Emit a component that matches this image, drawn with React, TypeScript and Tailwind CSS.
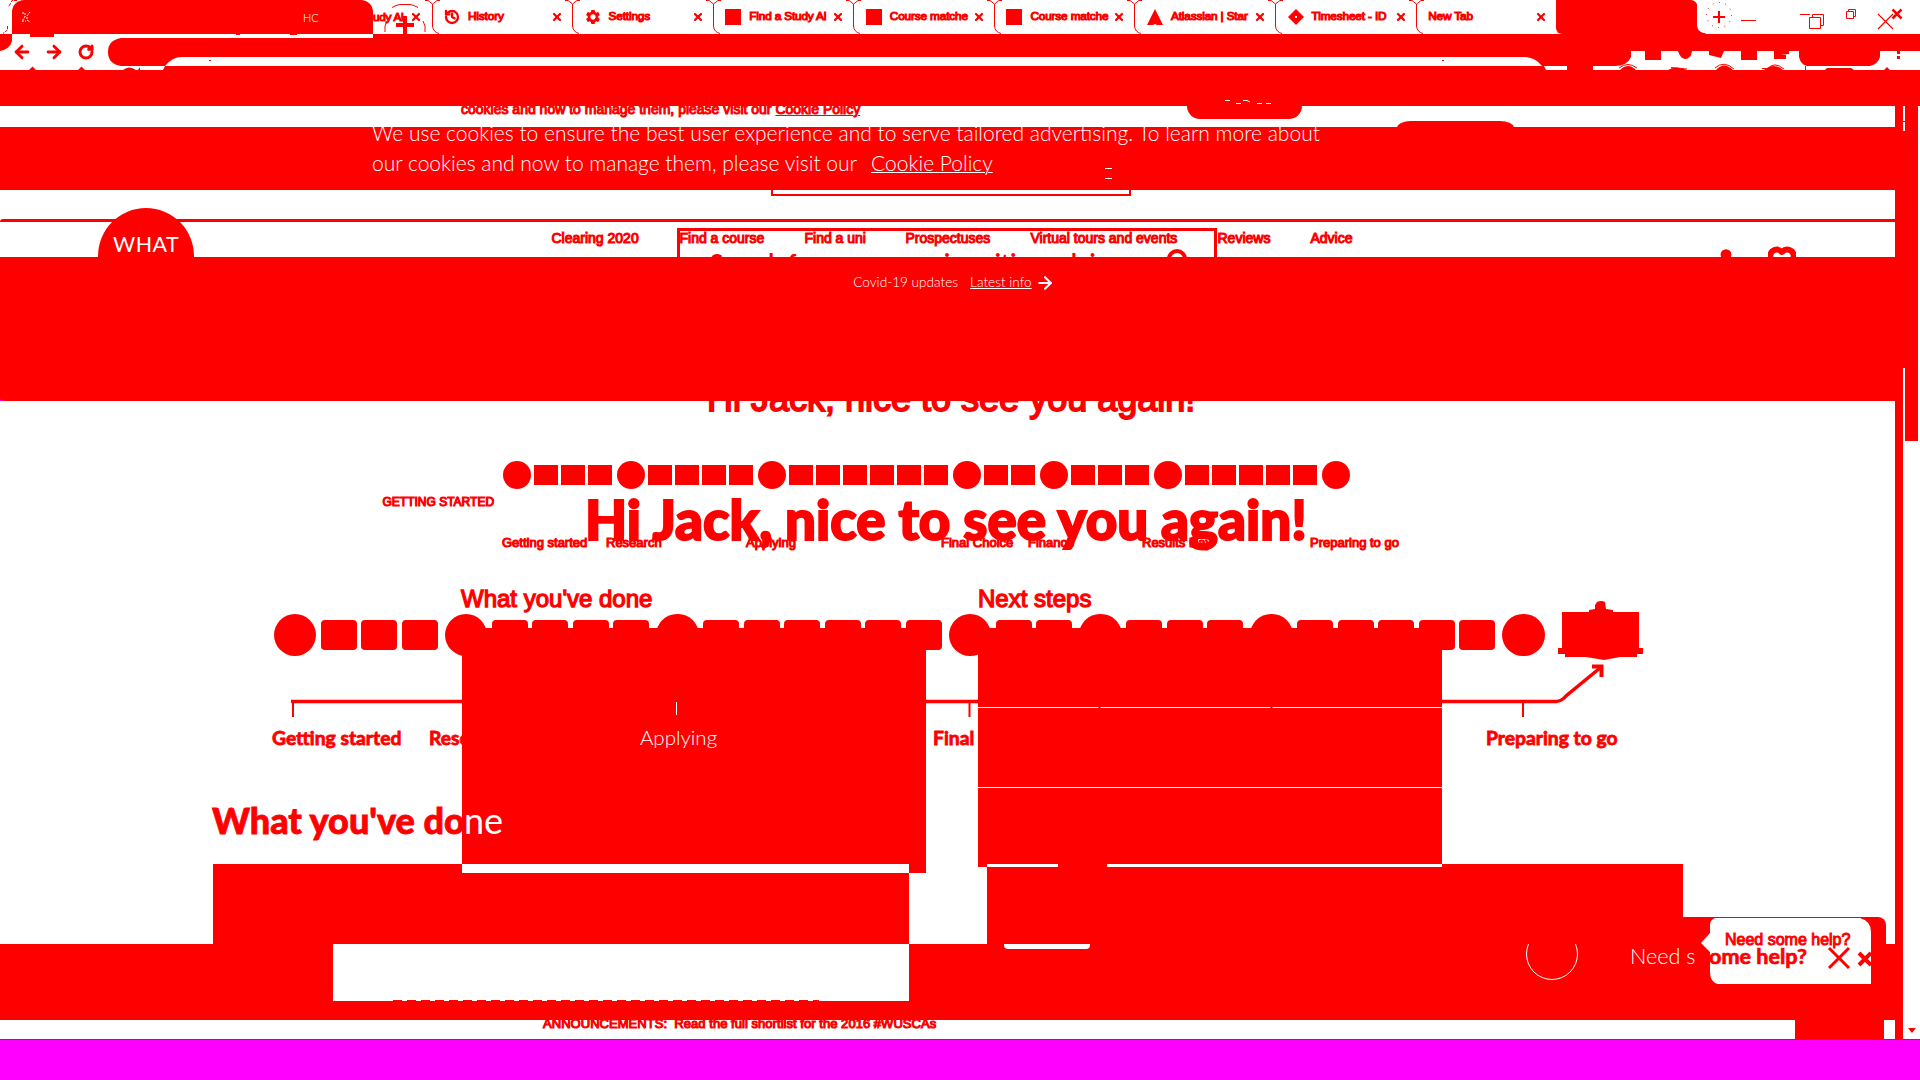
import { ArrowLeft, ArrowRight, Heart, History, RotateCw, Search, User, X } from "lucide-react";
import { MdSettings } from "react-icons/md";

const tabs = [
  { label: "History", icon: "history" },
  { label: "Settings", icon: "gear" },
  { label: "Find a Study Al", icon: "square" },
  { label: "Course matche", icon: "square" },
  { label: "Course matche", icon: "square" },
  { label: "Atlassian | Star", icon: "triangle" },
  { label: "Timesheet - ID", icon: "diamond" },
  { label: "New Tab", icon: "" },
];

function TabIcon({ kind }: { kind: string }) {
  if (kind === "history") return <History className="size-4" strokeWidth={3.5} />;
  if (kind === "gear") return <MdSettings className="size-4 scale-110" />;
  if (kind === "square") return <div className="size-4 bg-[#ff0000]" />;
  if (kind === "triangle")
    return (
      <svg className="size-4" viewBox="0 0 16 16">
        <path d="M8 0L16 16H10L8 15L6 16H0Z" fill="currentColor" />
      </svg>
    );
  return (
    <svg className="size-4" viewBox="0 0 16 16">
      <path d="M8 0L16 8L8 16L0 8ZM7 7V9H9V7Z" fill="currentColor" fillRule="evenodd" />
    </svg>
  );
}

function Tab({ label, icon }: { label: string; icon: string }) {
  return (
    <div className="relative flex h-[34px] w-[140.600px] shrink-0 items-center justify-between pr-[9px] pl-[12.500px]">
      <svg className="absolute top-0 -left-2" width="18" height="34" viewBox="0 0 18 34" fill="none" stroke="currentColor">
        <path d="M1 .5L4 .5L8.5 4L13 .5H16M8.5 4V26Q9 32 15 33.5" />
      </svg>
      <div className="flex items-center gap-2">
        {icon && <TabIcon kind={icon} />}
        <span className="text-[11.800px] leading-none tracking-[-0.15px] whitespace-nowrap [-webkit-text-stroke:1.100px_#ff0000]">{label}</span>
      </div>
      <X className="size-3" strokeWidth={4.5} />
    </div>
  );
}

function TabStrip() {
  return (
    <div className="relative flex h-[34px] shrink-0 overflow-hidden bg-white pl-[431.500px]">
      {tabs.map((t, i) => (
        <Tab key={i} {...t} />
      ))}
      <div className="h-[34px] w-[141px] rounded-tr-md rounded-bl-md bg-[#ff0000]" />
      <div className="absolute top-0 left-3 flex h-[34px] items-center">
        <div className="flex h-full w-[361px] items-center gap-[272px] rounded-t-xl bg-[#ff0000] pl-[9px] text-white">
          <svg width="10" height="12" fill="none" stroke="currentColor" strokeDasharray="2 1">
            <path d="M1 2H4V6L1 10H5M9 1L6 5V9L9 11" />
          </svg>
          <span className="font-['Lato'] text-[11px] leading-none font-light">HC</span>
        </div>
        <span className="w-[37px] overflow-hidden text-[11.800px] leading-4 tracking-[-0.3px] whitespace-nowrap [-webkit-text-stroke:1.100px_#ff0000]">udy Al</span>
        <X className="size-3" strokeWidth={4.5} />
      </div>
      <svg className="absolute top-0 left-[380px]" width="50" height="34" fill="none" stroke="currentColor">
        <path d="M12 7.500L16 5.500L20 4.500H30L34 5.500L38 7.500M5 32V26L7 21M45 32V26L43 21" />
        <path d="M16 25H34M25 16V34" strokeWidth="4" />
      </svg>
      <svg className="absolute top-0 left-0" width="17" height="34" fill="none" stroke="currentColor" strokeDasharray="3 1">
        <path d="M17 .5H12L8.500 7M7.500 26V30L3 33.500" />
      </svg>
      <svg className="absolute top-0 left-[1690px]" width="230" height="34" fill="none" stroke="currentColor">
        <path d="M0 0L7 4V26Q8 33 16 33.500V34H0Z" fill="currentColor" stroke="none" />
        <path d="M23 17H35M29 11V23" strokeWidth="2" />
        <circle cx="29" cy="15" r="12.500" strokeDasharray="1 5.500" />
        <path d="M51 20.500H66M110 14.500H120" />
        <path d="M119.500 17.500H130.500V28.500H119.500ZM122.500 17.500V14.500H133.500V25.500H130.500" />
        <path d="M156.500 11.500H163.500V18.500H156.500ZM158.500 11.500V9.500H165.500V16.500H163.500" />
        <path d="M188 14L203 29M203 14L188 29" strokeWidth="1.200" />
        <path d="M202.500 9.500L211.500 18.500M211.500 9.500L202.500 18.500" strokeWidth="2.500" />
      </svg>
    </div>
  );
}

function Toolbar() {
  return (
    <div className="relative h-[72px] shrink-0 bg-[#ff0000]">
      <svg className="block" width="1920" height="40" fill="#ffffff">
        <path d="M12 0H373V4H121Q108 6 108 18T121 32H165L163 36H0V17Q10 15 12 7Z" />
        <path d="M165 32Q172 23 182 23H1526Q1536 24 1542 32Z" />
        <path d="M1544 32H1567V36H1546ZM1593 32H1615Q1627 32 1631 23V17H1799V23Q1801 31 1807 32H1870Q1878 30 1880 23V17H1920V36H1593Z" />
        <g fill="#ff0000">
          <path d="M30 0H54V3H30ZM236 0H240V1H236ZM290 0H297V1H290ZM209 26H211V27H209ZM1442 26H1444V27H1442Z" />
          <path d="M29 36L32.500 32.500L36 36ZM78 36L81.500 32.500L85 36ZM123 36Q129 31 136 36H138L140 33V36Z" />
          <path d="M1645 17H1661V26H1645ZM1678 17H1692Q1691 25 1685 25Q1680 24 1678 17ZM1709 17H1724L1721 24L1709 21ZM1741 17H1757V26H1741ZM1774 17H1789V20L1781 21V25H1774ZM1781 21H1786V25H1781ZM1897 17H1900V20H1897ZM1897 22H1900V25H1897Z" />
          <path d="M1620 36Q1628 28 1636 36ZM1668 36Q1675 31 1687 36ZM1716 36Q1724 27 1733 36ZM1764 36Q1774 28 1783 36ZM1827 34H1851L1854 36H1825ZM1884 36L1887 33L1890 36Z" />
        </g>
        <g fill="none" stroke="#ff0000">
          <path d="M1619 34Q1628 27 1637 34M1715 34Q1724 26 1734 35M1762 34.500H1768Q1774 27 1784 35M1671 33.500L1687 35M1805.500 32V36" />
        </g>
      </svg>
      <div className="absolute top-[8px] left-[12px] flex items-center gap-3">
        <ArrowLeft className="size-5" strokeWidth={3.5} />
        <ArrowRight className="size-5" strokeWidth={3.5} />
        <RotateCw className="ml-0.5 size-4" strokeWidth={4.5} />
      </div>
      <svg className="absolute bottom-0 left-[1224px]" width="50" height="8" fill="none" stroke="#ffffff">
        <path d="M1 2.500H6M12 5.500H17M19 2.500H23L26 4M33 5.500H38M42 5.500H47" />
      </svg>
    </div>
  );
}

function CookieNotice() {
  return (
    <section className="relative h-[84px] shrink-0 bg-white">
      <div className="flex h-[21px] overflow-hidden pl-[461px]">
        <p className="-mt-[4px] w-[726px] text-[14px] leading-none whitespace-nowrap [-webkit-text-stroke:1.100px_#ff0000]">
          cookies and now to manage them, please visit our <span className="underline">Cookie Policy</span>
        </p>
        <div className="h-[13px] w-[115px] rounded-b-[14px] bg-[#ff0000]" />
        <div className="mt-[15px] ml-[95px] h-[7px] w-[117px] rounded-t-[14px_7px] bg-[#ff0000]" />
      </div>
      <div className="flex h-[63px] bg-[#ff0000] pl-[372px]">
        <p className="-mt-[9px] w-[733px] font-['Lato'] text-[21px] leading-[30px] font-light whitespace-nowrap text-white">
          We use cookies to ensure the best user experience and to serve tailored advertising. To learn more about
          <br />
          our cookies and now to manage them, please visit our
          <span className="ml-3.5 underline decoration-1">Cookie Policy</span>
        </p>
        <div className="mt-[41px] h-[11px] w-[7px] border-y border-white" />
      </div>
    </section>
  );
}

const navItems = [
  { label: "Clearing 2020", cls: "w-[128px]" },
  { label: "Find a course", cls: "w-[125px]" },
  { label: "Find a uni", cls: "w-[101px]" },
  { label: "Prospectuses", cls: "w-[125px]" },
  { label: "Virtual tours and events", cls: "w-[187px]" },
  { label: "Reviews", cls: "w-[93px]" },
  { label: "Advice", cls: "w-[60px]" },
];

function SiteHeader() {
  return (
    <header className="relative h-[67px] shrink-0 overflow-hidden bg-white">
      <div className="ml-[771px] h-[6px] w-[360px] border-2 border-t-0 border-[#ff0000]" />
      <div className="mt-[23px] h-[3px] w-[1895px] rounded-tl bg-[#ff0000]" />
      <nav className="flex pt-[9px] pl-[551.500px] text-[14px] leading-none whitespace-nowrap [-webkit-text-stroke:1.100px_#ff0000]">
        {navItems.map((n) => (
          <span key={n.label} className={n.cls}>
            {n.label}
          </span>
        ))}
      </nav>
      <div className="absolute top-[18px] left-[98px] flex size-[96px] justify-center rounded-full bg-[#ff0000] pt-[26px] font-['Lato'] text-[21.500px] leading-none tracking-[0.4px] text-white">WHAT</div>
      <div className="absolute top-[38px] left-[677px] flex h-[60px] w-[540px] justify-between border-[3px] border-[#ff0000] pt-[17px] pr-6 pl-[30px]">
        <span className="pt-[3px] font-['Lato'] text-[24px] leading-none font-bold whitespace-nowrap">Search for courses, universities, advice</span>
        <Search className="size-6" strokeWidth={4} />
      </div>
      <div className="absolute top-[57px] left-[1713px] flex gap-[29px]">
        <User className="size-[26px]" fill="currentColor" />
        <Heart className="-mt-0.5 size-7" strokeWidth={5} />
      </div>
    </header>
  );
}

function Hero() {
  return (
    <div className="relative z-10 flex h-[144px] shrink-0 justify-center rounded-b-[8px_2px] bg-[#ff0000] pt-[18px] text-white">
      <div className="flex h-4 items-center pr-[12px] font-['Lato'] text-[13.600px] leading-none font-light">
        <span className="mr-3">Covid-19 updates</span>
        <span className="underline">Latest info</span>
        <ArrowRight className="ml-[3px] size-5" strokeWidth={2.5} />
      </div>
    </div>
  );
}

const stages = [3, 4, 6, 2, 3, 5, 0];

function SmallTimeline() {
  return (
    <div className="mt-[44.500px] ml-[501px] flex items-center gap-[3px]">
      {stages.map((n, i) => (
        <div key={i} className="flex items-center gap-[3px]">
          <div className="ml-0.5 size-7 rounded-full bg-[#ff0000]" />
          {Array.from({ length: n }, (_, k) => (
            <div key={k} className="h-5 w-6 bg-[#ff0000]" />
          ))}
        </div>
      ))}
    </div>
  );
}

function LargeTimeline() {
  return (
    <div className="mt-[67.500px] ml-[271px] flex items-center gap-[4.500px]">
      {stages.map((n, i) => (
        <div key={i} className="flex items-center gap-[4.500px]">
          <div className="ml-[2.500px] size-[42.500px] rounded-full bg-[#ff0000]" />
          {Array.from({ length: n }, (_, k) => (
            <div key={k} className="h-[30px] w-9 rounded bg-[#ff0000]" />
          ))}
        </div>
      ))}
    </div>
  );
}

function CompactJourney() {
  return (
    <section className="flex flex-col leading-none whitespace-nowrap [-webkit-text-stroke:1.100px_#ff0000]">
      <h2 className="-mt-[20.500px] ml-[707px] text-[36px] leading-none [-webkit-text-stroke:1.800px_#ff0000]">Hi Jack, nice to see you again!</h2>
      <SmallTimeline />
      <p className="mt-[6.500px] ml-[382.500px] text-[12px] leading-none">GETTING STARTED</p>
      <div className="mt-[28.500px] ml-[502px] flex text-[13px] leading-none">
        <span className="w-[104px]">Getting started</span>
        <span className="w-[140px]">Research</span>
        <span className="w-[195px]">Applying</span>
        <span className="w-[87px]">Final Choice</span>
        <span className="w-[114px]">Finance</span>
        <span className="w-[168px]">Results Day</span>
        <span>Preparing to go</span>
      </div>
      <div className="mt-[37.500px] ml-[461px] flex text-[24px] leading-none [-webkit-text-stroke:1.300px_#ff0000]">
        <h3 className="w-[517px]">What you've done</h3>
        <h3>Next steps</h3>
      </div>
      <div className="mt-[17.500px] ml-[462px] flex items-start gap-[52px]">
        <div className="h-[245px] w-[464px] bg-[#ff0000]" />
        <div className="flex h-[239px] w-[464px] flex-col gap-px bg-white">
          <div className="h-[79px] bg-[#ff0000]" />
          <div className="h-[79px] bg-[#ff0000]" />
          <div className="h-[79px] bg-[#ff0000]" />
        </div>
      </div>
    </section>
  );
}

function FullJourney() {
  return (
    <section className="absolute inset-0 flex flex-col font-['Lato'] whitespace-nowrap">
      <h1 className="mt-[91px] ml-[585px] h-[54px] text-[54.600px] leading-none font-black [-webkit-text-stroke:2px_#ff0000]">Hi Jack, nice to see you again!</h1>
      <LargeTimeline />
      <div className="mt-[72px] ml-[272px] flex h-[19px] text-[19.300px] leading-none font-bold [-webkit-text-stroke:0.800px_#ff0000]">
        <span className="w-[157px]">Getting started</span>
        <span className="w-[504px]">Research</span>
        <span className="w-[553px]">Final Choice</span>
        <span>Preparing to go</span>
      </div>
      <h2 className="mt-[55px] ml-[212px] flex h-9 text-[36px] leading-none font-black">
        <span className="w-[252px] [-webkit-text-stroke:0.800px_#ff0000]">What you've do</span>
        <span className="font-normal text-white">ne</span>
      </h2>
      <div className="mt-auto ml-[213px] flex h-20 gap-[78px]">
        <div className="w-[696px] bg-[#ff0000]">
          <div className="ml-[249px] h-[9px] bg-white" />
        </div>
        <div className="w-[696px] bg-[#ff0000]">
          <div className="flex h-[3px] gap-[49px]">
            <div className="w-[71px] bg-white" />
            <div className="w-[335px] bg-white" />
          </div>
        </div>
      </div>
      <svg className="absolute top-[199px] left-[280px]" width="1380" height="120" viewBox="0 0 1380 120" fill="none" stroke="currentColor">
        <path d="M11 101.500H1276Q1282 101 1286 96L1320 68" strokeWidth="3.500" />
        <path d="M1312 66.500H1321.500V77" strokeWidth="4" />
        <path d="M13 102V117M689.500 102V117M819.500 102V117M991.500 102V117M1243 102V117" strokeWidth="2" />
        <path d="M396.500 102V115" stroke="#ffffff" />
        <path d="M1282 12H1309V10L1315 9V5L1317 2Q1321 0 1325 2L1326 9L1333 10V12H1359V48H1363V54H1357V57H1340L1324 60L1306 57H1285V54H1278V48H1282Z" fill="currentColor" stroke="none" />
      </svg>
      <span className="absolute top-[326px] left-[640px] text-[20.500px] leading-none font-light text-white">Applying</span>
    </section>
  );
}

function Journey() {
  return (
    <main className="relative h-[543px] shrink-0 bg-white">
      <CompactJourney />
      <FullJourney />
    </main>
  );
}

function Footer() {
  return (
    <footer className="relative shrink-0">
      <div className="flex h-[76px] items-start overflow-hidden bg-[#ff0000] pl-[333px]">
        <div className="flex h-[57px] w-[576px] items-end bg-white pl-[60px]">
          <div className="h-px w-[426px] bg-[repeating-linear-gradient(90deg,#ff0000_0_9px,#ffffff_9px_14px)]" />
        </div>
        <div className="ml-[95px] h-[5px] w-[86px] rounded-b-[4px] bg-white" />
        <div className="-mt-4 ml-[436px] size-[52px] rounded-full border border-white" />
      </div>
      <div className="flex h-[19px] bg-white pl-[543px]">
        <span className="-mt-[3px] w-[1252px] text-[13px] leading-none tracking-[0.04px] whitespace-pre [-webkit-text-stroke:1.100px_#ff0000]">ANNOUNCEMENTS:  Read the full shortlist for the 2016 #WUSCAs</span>
        <div className="w-[89px] bg-[#ff0000]" />
      </div>
      <div className="h-px bg-[#ff0000]" />
    </footer>
  );
}

function HelpBubble() {
  return (
    <aside className="absolute top-[917px] left-[1630px] h-[67px] w-[256px] text-[#ff0000]">
      <div className="ml-[53px] h-[67px] w-[203px] rounded-tr-lg bg-[#ff0000] pt-px pl-[17px]">
        <svg width="172" height="66" viewBox="0 0 172 66">
          <path d="M15 0H160Q171 3 171 14V66H18Q10 64 10 54V34L1 25L10 15V7Q10 2 15 0Z" fill="#fff" />
        </svg>
      </div>
      <div className="absolute inset-0 flex flex-col whitespace-nowrap">
        <span className="mt-[14.500px] ml-[95px] h-[14px] text-[16px] leading-none [-webkit-text-stroke:1px_#ff0000]">Need some help?</span>
        <div className="flex font-['Lato'] text-[21.600px] leading-none font-bold">
          <span className="w-[79px] font-light text-white">Need s</span>
          <span className="w-[118px] [-webkit-text-stroke:0.700px_#ff0000]">ome help?</span>
          <svg width="44" height="24" fill="none" stroke="currentColor">
            <path d="M2 2L22 22M22 2L2 22" strokeWidth="3" />
            <path d="M32 7L44 19M44 7L32 19" strokeWidth="4" />
          </svg>
        </div>
      </div>
    </aside>
  );
}

function Scrollbar() {
  return (
    <div className="absolute top-[106px] left-[1895px] z-20 flex h-[933px] w-[25px]">
      <div className="w-2 bg-[#ff0000]" />
      <div className="w-0.5 bg-[#ff0000]">
        <div className="h-[15px] bg-white" />
        <div className="mt-px h-[9px] bg-white" />
        <div className="mt-[237px] h-[671px] bg-white" />
      </div>
      <div className="flex flex-1 flex-col justify-between bg-white pb-[5px]">
        <div className="h-[335px] w-[13px] bg-[#ff0000]" />
        <svg className="ml-[3px]" width="8" height="6">
          <path d="M0 0H8L4 5Z" fill="currentColor" />
        </svg>
      </div>
    </div>
  );
}

export default function App() {
  return (
    <div className="relative flex h-[1080px] w-[1920px] flex-col overflow-hidden bg-[#ff00ff] font-['Liberation_Sans',sans-serif] text-[#ff0000]">
      <TabStrip />
      <Toolbar />
      <CookieNotice />
      <SiteHeader />
      <Hero />
      <Journey />
      <Footer />
      <HelpBubble />
      <Scrollbar />
    </div>
  );
}
